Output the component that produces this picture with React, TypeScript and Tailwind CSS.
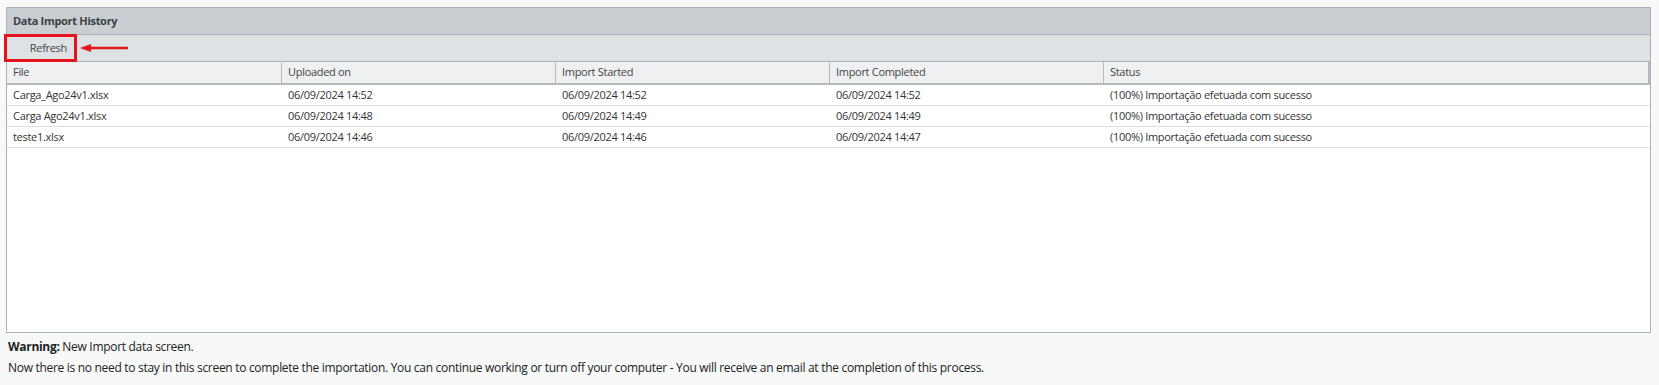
const rows = [
  {
    file: "Carga_Ago24v1.xlsx",
    uploaded: "06/09/2024 14:52",
    started: "06/09/2024 14:52",
    completed: "06/09/2024 14:52",
    status: "(100%) Importação efetuada com sucesso",
  },
  {
    file: "Carga Ago24v1.xlsx",
    uploaded: "06/09/2024 14:48",
    started: "06/09/2024 14:49",
    completed: "06/09/2024 14:49",
    status: "(100%) Importação efetuada com sucesso",
  },
  {
    file: "teste1.xlsx",
    uploaded: "06/09/2024 14:46",
    started: "06/09/2024 14:46",
    completed: "06/09/2024 14:47",
    status: "(100%) Importação efetuada com sucesso",
  },
]

const cols = ["File", "Uploaded on", "Import Started", "Import Completed", "Status"]

export default function App() {
  return (
    <div className="min-h-[385px] w-full bg-[#f7f8f8] pl-[6px] pr-[8px] pt-[7px] font-['Open_Sans','Noto_Sans',sans-serif] text-[#333]">
      {/* panel */}
      <div className="flex flex-col border border-[#aab1b8] bg-white">
        <div className="flex h-[27px] items-center border-b border-[#aab1b8] bg-[#c9ced2] px-[6px] text-[11px] font-bold tracking-[-0.3px] text-[#3a3f44]">
          Data Import History
        </div>

        {/* toolbar */}
        <div className="relative flex h-[27px] items-center border-b border-[#aab1b8] bg-[#dfe2e5]">
          <button className="ml-[-3px] flex h-[28px] w-[73px] items-center justify-end border-[3px] border-[#e8131b] pr-[7px] text-[11px] tracking-[-0.3px] text-[#444]">
            Refresh
          </button>
          <svg width="50" height="10" viewBox="0 0 50 10" className="ml-[3px]">
            <line x1="8" y1="5" x2="47" y2="5" stroke="#e8131b" strokeWidth="2.5" strokeLinecap="round" />
            <polygon points="0,5 11,1 11,9" fill="#e8131b" />
          </svg>
        </div>

        {/* header */}
        <div className="grid h-[23px] grid-cols-[274px_274px_274px_274px_1fr] border-b-2 border-r-2 border-[#b3bac0] bg-[#eef0f2] text-[11px] tracking-[-0.3px] text-[#444]">
          {cols.map((c, i) => (
            <div key={c} className={`flex items-center px-[6px] ${i > 0 ? "border-l border-[#b3bac0]" : ""}`}>
              {c}
            </div>
          ))}
        </div>

        {/* rows */}
        <div className="h-[247px]">
          {rows.map((r, i) => (
            <div
              key={i}
              className="grid h-[21px] grid-cols-[274px_274px_274px_274px_1fr] border-b border-[#dcdfe2] text-[11px] tracking-[-0.3px] text-[#333]"
            >
              <div className="flex items-center px-[6px]">{r.file}</div>
              <div className="flex items-center px-[7px]">{r.uploaded}</div>
              <div className="flex items-center px-[7px]">{r.started}</div>
              <div className="flex items-center px-[7px]">{r.completed}</div>
              <div className="flex items-center px-[7px]">{r.status}</div>
            </div>
          ))}
        </div>
      </div>

      {/* footer note */}
      <div className="px-[2px] pt-[3px] text-[12px] leading-[21px] tracking-[-0.3px] text-[#222]">
        <p>
          <span className="font-bold">Warning:</span> New Import data screen.
        </p>
        <p>
          Now there is no need to stay in this screen to complete the importation. You can continue working or turn off
          your computer - You will receive an email at the completion of this process.
        </p>
      </div>
    </div>
  )
}
